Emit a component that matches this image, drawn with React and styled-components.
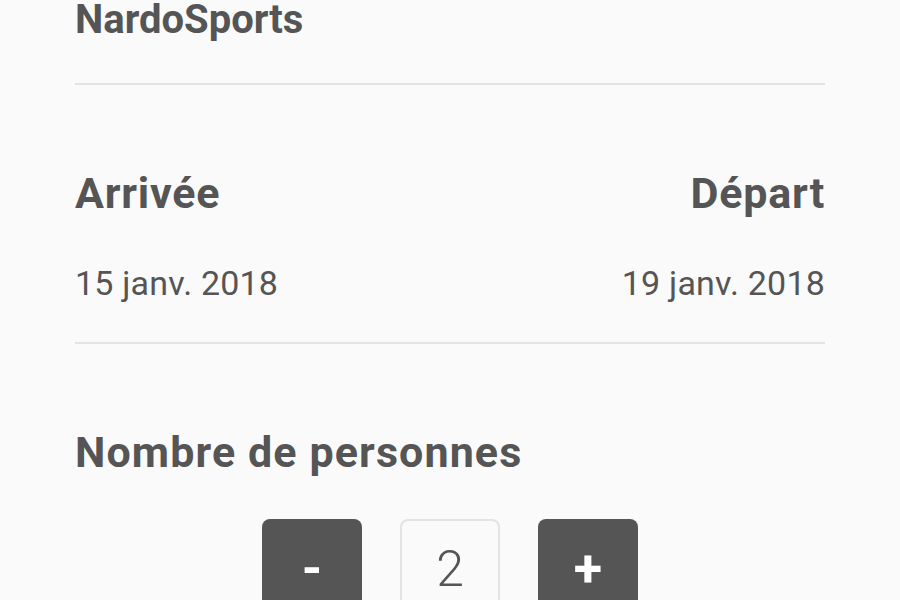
import React, { useState } from 'react';
import styled, { createGlobalStyle } from 'styled-components';

const GlobalStyle = createGlobalStyle`
  html, body {
    margin: 0;
    padding: 0;
    background: #fafafa;
  }
  body {
    font-family: Roboto, "Noto Sans", "Liberation Sans", sans-serif;
    color: #555555;
  }
`;

const Page = styled.div`
  width: 900px;
  height: 600px;
  overflow: hidden;
  padding: 0 75px;
  box-sizing: border-box;
`;

const Title = styled.h1`
  margin: 0;
  font-size: 40px;
  line-height: 40px;
  font-weight: 700;
`;

const Divider = styled.hr`
  margin: ${p => p.$top}px 0 0;
  border: 0;
  height: 2px;
  background: #e3e3e3;
`;

const DatesRow = styled.div`
  display: flex;
  justify-content: space-between;
  margin-top: 83px;
`;

const DateCol = styled.div`
  display: flex;
  flex-direction: column;
  align-items: ${p => (p.$right ? 'flex-end' : 'flex-start')};
`;

const Heading = styled.h2`
  margin: 0;
  font-size: 43px;
  line-height: 50px;
  font-weight: 700;
  letter-spacing: ${p => p.$spacing || 0.8}px;
`;

const DateText = styled.div`
  margin-top: 45px;
  font-size: 34px;
  line-height: 40px;
  font-weight: 400;
  letter-spacing: 0.2px;
`;

const Section = styled.div`
  margin-top: 83px;
`;

const Counter = styled.div`
  display: flex;
  justify-content: center;
  gap: 38px;
  margin-top: 42px;
`;

const StepButton = styled.button`
  width: 100px;
  height: 100px;
  border: 0;
  border-radius: 8px;
  background: #555555;
  color: #ffffff;
  font-family: Roboto, "Liberation Sans", sans-serif;
  font-size: 52px;
  font-weight: 700;
  line-height: 1;
  padding: 0;
  display: flex;
  align-items: center;
  justify-content: center;
`;

const Value = styled.div`
  width: 100px;
  height: 100px;
  box-sizing: border-box;
  border: 2px solid #e3e3e3;
  border-radius: 8px;
  background: #fafafa;
  display: flex;
  align-items: center;
  justify-content: center;
  font-size: 50px;
  font-weight: 300;
`;

const App = () => {
  const [count, setCount] = useState(2);
  return (
    <>
      <GlobalStyle />
      <Page>
        <Title>NardoSports</Title>
        <Divider $top={43} />
        <DatesRow>
          <DateCol>
            <Heading>Arrivée</Heading>
            <DateText>15 janv. 2018</DateText>
          </DateCol>
          <DateCol $right>
            <Heading>Départ</Heading>
            <DateText>19 janv. 2018</DateText>
          </DateCol>
        </DatesRow>
        <Divider $top={39} />
        <Section>
          <Heading $spacing={1.1}>Nombre de personnes</Heading>
          <Counter>
            <StepButton onClick={() => setCount(c => Math.max(1, c - 1))}>-</StepButton>
            <Value>{count}</Value>
            <StepButton onClick={() => setCount(c => c + 1)}>+</StepButton>
          </Counter>
        </Section>
      </Page>
    </>
  );
};

export default App;
